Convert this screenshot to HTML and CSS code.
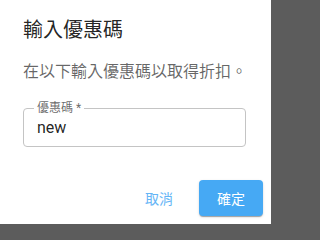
FILE: index.html
```html
<!DOCTYPE html>
<html lang="zh-Hant">
<head>
<meta charset="utf-8">
<link rel="stylesheet" href="styles.css">
</head>
<body>
<div class="dialog">
  <h2 class="title">輸入優惠碼</h2>
  <p class="text">在以下輸入優惠碼以取得折扣。</p>
  <fieldset class="field">
    <legend class="label">優惠碼 *</legend>
    <input class="input" type="text" value="new">
  </fieldset>
  <div class="actions">
    <button class="btn btn-text">取消</button>
    <button class="btn btn-primary">確定</button>
  </div>
</div>
</body>
</html>
```
FILE: styles.css
```css
html, body {
  margin: 0;
  padding: 0;
  width: 272px;
  height: 224px;
  overflow: hidden;
  background: #5c5c5c;
}
.dialog {
  width: 271px;
  height: 224px;
  background: #fff;
  display: flex;
  flex-direction: column;
  font-family: Roboto, "Noto Sans CJK TC", sans-serif;
  box-sizing: border-box;
}
.title {
  margin: 0;
  padding: 14px 23px 0;
  font-size: 20px;
  font-weight: 400;
  line-height: 32px;
  color: rgba(0, 0, 0, 0.87);
}
.text {
  margin: 14px 0 0;
  padding: 0 23px;
  font-size: 16px;
  line-height: 24px;
  color: rgba(0, 0, 0, 0.6);
}
.field {
  margin: 18px 25px 0 23px;
  padding: 0 13px 6px;
  border: 1px solid #c4c4c4;
  border-radius: 4px;
  min-width: 0;
}
.label {
  padding: 0 3px;
  margin-left: -3px;
  font-size: 12px;
  line-height: 12px;
  color: rgba(0, 0, 0, 0.6);
}
.input {
  display: block;
  width: 100%;
  box-sizing: border-box;
  margin: 2px 0 0;
  padding: 0;
  border: 0;
  outline: none;
  height: 24px;
  font-family: Roboto, "Noto Sans CJK TC", sans-serif;
  font-size: 16px;
  line-height: 24px;
  color: rgba(0, 0, 0, 0.87);
  background: transparent;
}
.actions {
  margin-top: auto;
  padding: 8px;
  display: flex;
  justify-content: flex-end;
  gap: 8px;
}
.btn {
  min-width: 64px;
  height: 36px;
  padding: 0 16px;
  border: 0;
  border-radius: 4px;
  font-family: Roboto, "Noto Sans CJK TC", sans-serif;
  font-size: 14px;
  background: transparent;
  cursor: pointer;
}
.btn-text {
  color: #64b5f6;
}
.btn-primary {
  background: #46a9f4;
  color: #fff;
  box-shadow: 0 2px 1px -1px rgba(0,0,0,0.2), 0 1px 1px 0 rgba(0,0,0,0.14), 0 1px 3px 0 rgba(0,0,0,0.12);
}
```
